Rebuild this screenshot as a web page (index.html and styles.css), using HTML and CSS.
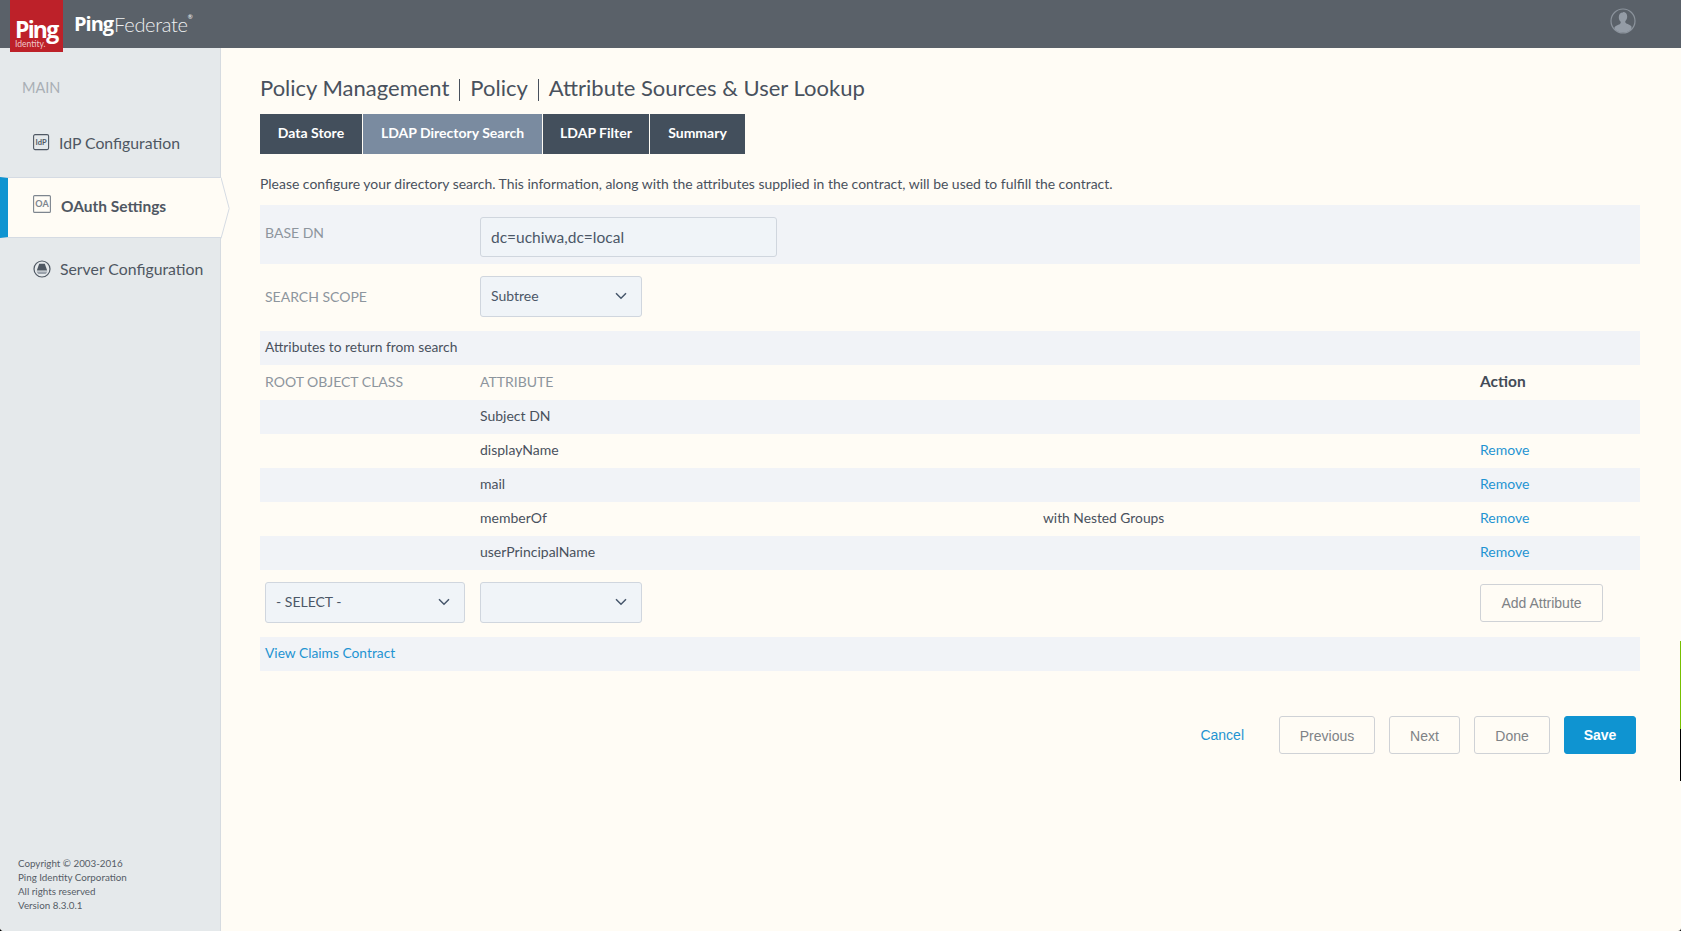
FILE: index.html
```html
<!DOCTYPE html>
<html lang="en">
<head>
<meta charset="utf-8">
<title>PingFederate</title>
<link rel="stylesheet" href="styles.css">
</head>
<body>
<div class="app">
  <header class="topbar">
    <div class="logo"><span class="logo-ping">Ping</span><span class="logo-id">Identity.</span></div>
    <div class="brand"><b>Ping</b><span>Federate</span><sup>®</sup></div>
    <svg class="user" viewBox="0 0 26 26" width="26" height="26">
      <defs><clipPath id="uc"><circle cx="13" cy="13" r="11.6"/></clipPath></defs>
      <circle cx="13" cy="13" r="12" fill="none" stroke="#8b939c" stroke-width="1.2"/>
      <g clip-path="url(#uc)" fill="#949ca6">
        <path d="M13 4.6c-2.8 0-4.2 2-4.2 4.6 0 2 .8 3.6 1.9 4.6.2 1-.1 1.9-1 2.4-1.7.8-4.2 1.4-5.2 3V26h17v-7.400c-1-1.600-3.500-2.200-5.200-3-.9-.5-1.200-1.400-1-2.400 1.100-1 1.900-2.600 1.900-4.600 0-2.600-1.400-4.600-4.200-4.600z"/>
      </g>
    </svg>
  </header>
  <div class="body">
    <aside class="sidebar">
      <div class="side-title">MAIN</div>
      <nav class="nav">
        <a class="nav-item first">
          <svg class="nav-icon" viewBox="0 0 17 17" width="17" height="17"><rect x=".6" y=".6" width="15" height="15" rx="1.500" fill="none" stroke="#4f5863" stroke-width="1.100"/><text x="8.100" y="11" text-anchor="middle" class="icon-text">IdP</text></svg>
          <span>IdP Configuration</span>
        </a>
        <a class="nav-item active">
          <svg class="nav-icon oa" viewBox="0 0 18 18" width="18" height="18"><rect x=".6" y=".6" width="16.800" height="16.800" rx="1" fill="#fffcf5" stroke="#7d858e" stroke-width="1.100"/><text x="9" y="12" text-anchor="middle" class="icon-text">OA</text></svg>
          <span>OAuth Settings</span>
          <svg class="nav-arrow" viewBox="0 0 9 63" width="9" height="63"><path d="M0 .5 8.200 31.500 0 61.500z" fill="#fffcf5"/><path d="M0 .5 8.200 31.500 0 61.500" fill="none" stroke="#d5dbe3"/></svg>
        </a>
        <a class="nav-item server">
          <svg class="nav-icon" viewBox="0 0 18 18" width="18" height="18"><circle cx="9" cy="9" r="8" fill="none" stroke="#4f5863" stroke-width="1.200"/><path d="M6.200 3.800h5.600l2.400 6.700H3.800z" fill="#4f5863"/><path d="M3.500 11.500h11l-1.800 2.500H5.300z" fill="#9aa2ab"/></svg>
          <span>Server Configuration</span>
        </a>
      </nav>
      <div class="copyright">
        <div>Copyright © 2003-2016</div>
        <div>Ping Identity Corporation</div>
        <div>All rights reserved</div>
        <div>Version 8.3.0.1</div>
      </div>
    </aside>
    <main class="main">
      <h1 class="crumbs"><span>Policy Management</span><span>Policy</span><span>Attribute Sources &amp; User Lookup</span></h1>
      <div class="tabs">
        <a class="tab t1">Data Store</a>
        <a class="tab t2 current">LDAP Directory Search</a>
        <a class="tab t3">LDAP Filter</a>
        <a class="tab t4">Summary</a>
      </div>
      <p class="intro">Please configure your directory search. This information, along with the attributes supplied in the contract, will be used to fulfill the contract.</p>

      <div class="form-row band base">
        <label class="label">BASE DN</label>
        <div class="input wide">dc=uchiwa,dc=local</div>
      </div>
      <div class="form-row scope">
        <label class="label">SEARCH SCOPE</label>
        <div class="input select s-scope">Subtree<svg class="chev" viewBox="0 0 12 8" width="12" height="8"><path d="M1 1.200 6 6.200l5-5" fill="none" stroke="#46566b" stroke-width="1.500"/></svg></div>
      </div>

      <div class="section band">Attributes to return from search</div>
      <div class="grid head">
        <div class="label">ROOT OBJECT CLASS</div><div class="label">ATTRIBUTE</div><div></div><div class="action-h">Action</div>
      </div>
      <div class="grid band"><div></div><div>Subject DN</div><div></div><div></div></div>
      <div class="grid"><div></div><div>displayName</div><div></div><a class="link">Remove</a></div>
      <div class="grid band"><div></div><div>mail</div><div></div><a class="link">Remove</a></div>
      <div class="grid"><div></div><div>memberOf</div><div class="nested">with Nested Groups</div><a class="link">Remove</a></div>
      <div class="grid band"><div></div><div>userPrincipalName</div><div></div><a class="link">Remove</a></div>
      <div class="grid add">
        <div class="input select s-root">- SELECT -<svg class="chev" viewBox="0 0 12 8" width="12" height="8"><path d="M1 1.200 6 6.200l5-5" fill="none" stroke="#46566b" stroke-width="1.500"/></svg></div>
        <div class="input select s-scope"><svg class="chev" viewBox="0 0 12 8" width="12" height="8"><path d="M1 1.200 6 6.200l5-5" fill="none" stroke="#46566b" stroke-width="1.500"/></svg></div>
        <div></div>
        <button class="btn add-btn">Add Attribute</button>
      </div>
      <div class="section band"><a class="link">View Claims Contract</a></div>

      <div class="footer">
        <a class="link cancel">Cancel</a>
        <button class="btn prev">Previous</button>
        <button class="btn next">Next</button>
        <button class="btn done">Done</button>
        <button class="btn save">Save</button>
      </div>
    </main>
  </div>
  <i class="edge edge-g"></i><i class="edge edge-k"></i>
</div>
</body>
</html>
```
FILE: styles.css
```css
* { box-sizing: border-box; }
html { background: #000; }
body { margin: 0; font-family: Lato, "Open Sans", sans-serif; font-size: 14px; color: #49515d; }
.app { position: relative; height: 931px; display: flex; flex-direction: column; background: #fffcf5; overflow: hidden; border-bottom-left-radius: 4px; border-bottom-right-radius: 3px; }

.topbar { height: 48px; flex: none; background: #5a6169; display: flex; align-items: center; padding-left: 74px; padding-right: 41px; }
.logo { position: absolute; left: 10px; top: 0; width: 53px; height: 52px; background: #bd2129; color: #fff; display: flex; flex-direction: column; padding: 19px 0 0 5px; }
.logo-ping { font: 700 23px/21px "Open Sans", sans-serif; letter-spacing: -1.800px; }
.logo-id { font: 400 8.500px/9px Lato, sans-serif; color: #f0c8ca; }
.brand { color: #fff; font-size: 20px; line-height: 28px; display: flex; letter-spacing: -.300px; }
.brand b { font: 700 20px/28px "Open Sans", sans-serif; letter-spacing: -1px; margin-right: 1px; }
.brand span { font-weight: 300; color: #eef0f1; }
.brand sup { font-size: 6px; line-height: 14px; margin: 0; }
.user { margin-left: auto; margin-top: -6px; margin-right: 4px; }

.body { flex: 1; display: flex; min-height: 0; }
.sidebar { width: 221px; flex: none; background: #e5e9eb; border-right: 1px solid #d6dbe0; display: flex; flex-direction: column; }
.side-title { color: #a9afb5; font-size: 14.500px; line-height: 20px; padding: 30px 0 0 22px; height: 49px; }
.nav { display: flex; flex-direction: column; gap: 5px; margin-top: 21px; margin-right: -1px; }
.nav-item { height: 54px; display: flex; align-items: center; padding-left: 33px; color: #4f5762; font-size: 15.800px; position: relative; }
.nav-item .nav-icon { flex: none; margin-right: 9px; }
.nav-item.first { padding-bottom: 5px; }
.first .nav-icon { margin-top: -1px; }
.nav-item.server { padding-bottom: 4px; }
.server .nav-icon { margin-top: 1px; }
.nav-item.active { height: 61px; background: #fffcf5; border-left: 8px solid #0f94d1; border-top: 1px solid #d5dbe3; border-bottom: 1px solid #d5dbe3; padding-left: 25px; padding-bottom: 4px; font-weight: 700; font-size: 15.500px; }
.nav-item.active .nav-icon { margin-top: -4px; margin-right: 10px; }
.nav-arrow { position: absolute; left: 213px; top: -1px; }
.icon-text { font: 700 7.500px Lato, sans-serif; fill: #4f5863; }
.oa .icon-text { font-size: 9px; fill: #7d858e; }
.copyright { margin-top: auto; padding: 0 0 19px 18px; font-size: 9.800px; line-height: 14px; color: #555c66; }

.main { flex: 1; min-width: 0; padding: 0 41px 0 39px; display: flex; flex-direction: column; }
.crumbs { margin: 25px 0 0; height: 30px; font-size: 22px; line-height: 30px; font-weight: 400; color: #49515d; display: flex; }
.crumbs span + span { border-left: 1px solid #49515d; margin-left: 10px; padding-left: 10px; line-height: 18px; margin-top: 6px; height: 22px; }
.tabs { display: flex; gap: 1px; margin-top: 11px; height: 40px; }
.tab { background: #434f5c; color: #fff; font-weight: 700; font-size: 14px; line-height: 38px; text-align: center; }
.t1 { width: 102px; } .t2 { width: 179px; } .t3 { width: 106px; } .t4 { width: 95px; }
.tab.current { background: #7a8ba0; }
.intro { margin: 20px 0 0; height: 31px; font-size: 13.950px; line-height: 20px; }
.band { background: #f1f3f7; }
.label { color: #8d959d; font-size: 14px; }

.form-row { display: grid; grid-template-columns: 215px 1fr; padding-left: 5px; }
.base { height: 59px; padding-top: 12px; }
.base .label { padding-top: 6px; line-height: 20px; }
.scope { height: 67px; padding-top: 12px; align-items: center; align-content: start; }
.input { background: #f0f4f8; border: 1px solid #d0d6de; border-radius: 3px; color: #4b5767; font-size: 14px; display: flex; align-items: center; padding-left: 10px; }
.wide { width: 297px; height: 40px; font-size: 15.500px; }
.select { position: relative; height: 41px; justify-content: space-between; padding-right: 14px; padding-bottom: 2px; }
.s-scope { width: 162px; }
.s-root { width: 200px; }
.chev { margin-left: auto; flex: none; }

.section { height: 34px; line-height: 32px; padding-left: 5px; font-size: 13.800px; }
.grid { display: grid; grid-template-columns: 215px 563px 437px 1fr; padding-left: 5px; padding-bottom: 4px; height: 34px; align-items: center; font-size: 14px; }
.nested { font-size: 13.800px; }
.head { height: 35px; padding-bottom: 3px; }
.action-h { font-weight: 700; font-size: 15.500px; color: #434b57; }
.link { color: #1f94d2; }
.add { height: 67px; padding-bottom: 2px; }
.btn { font-family: "Liberation Sans", Arial, sans-serif; height: 38px; background: transparent; border: 1px solid #cfd2d6; border-radius: 3px; color: #7e8286; font-size: 14px; padding: 0; }
.add-btn { width: 123px; }
.footer { display: flex; align-items: center; margin-top: 45px; height: 38px; padding-right: 4px; }
.cancel { margin-left: auto; margin-right: 35px; font-family: "Liberation Sans", Arial, sans-serif; font-size: 14px; }
.prev { width: 96px; padding-top: 2px; } .next { width: 71px; padding-top: 2px; } .done { width: 76px; padding-top: 2px; }
.next, .done, .save { margin-left: 14px; }
.save { width: 72px; background: #0f94d1; border-color: #0f94d1; color: #fff; font-weight: 700; }

.edge { position: absolute; right: 0; width: 1px; }
.edge-g { top: 641px; height: 88px; background: #77c000; }
.edge-k { top: 729px; height: 52px; background: #000; }
```
